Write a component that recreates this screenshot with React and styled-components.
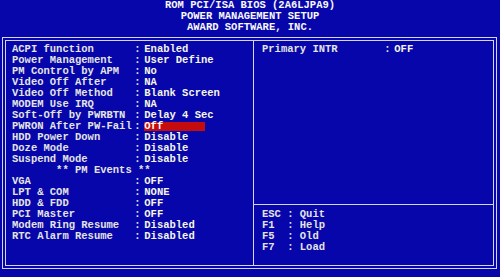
import React from 'react';
import styled, { createGlobalStyle } from 'styled-components';

const GlobalStyle = createGlobalStyle`
  body {
    margin: 0;
    background: #0606aa;
    font-family: 'Liberation Mono', 'DejaVu Sans Mono', monospace;
    font-weight: bold;
    font-size: 10.5px;
  }
`;

const settings = [
  ['ACPI function', ':', 'Enabled'],
  ['Power Management', ':', 'User Define'],
  ['PM Control by APM', ':', 'No'],
  ['Video Off After', ':', 'NA'],
  ['Video Off Method', ':', 'Blank Screen'],
  ['MODEM Use IRQ', ':', 'NA'],
  ['Soft-Off by PWRBTN', ':', 'Delay 4 Sec'],
  ['PWRON After PW-Fail', ':', 'Off', true],
  ['HDD Power Down', ':', 'Disable'],
  ['Doze Mode', ':', 'Disable'],
  ['Suspend Mode', ':', 'Disable'],
  null,
  ['VGA', ':', 'OFF'],
  ['LPT & COM', ':', 'NONE'],
  ['HDD & FDD', ':', 'OFF'],
  ['PCI Master', ':', 'OFF'],
  ['Modem Ring Resume', ':', 'Disabled'],
  ['RTC Alarm Resume', ':', 'Disabled'],
];

const keys = [
  ['ESC', 'Quit'],
  ['F1', 'Help'],
  ['F5', 'Old'],
  ['F7', 'Load'],
];

function App() {
  return (
    <Screen>
      <GlobalStyle />
      <Header>
        <div>ROM PCI/ISA BIOS (2A6LJPA9)</div>
        <div>POWER MANAGEMENT SETUP</div>
        <div>AWARD SOFTWARE, INC.</div>
      </Header>
      <Frame>
        <Inner>
          <LeftPanel>
            {settings.map((s, i) =>
              s ? (
                <Row key={i}>
                  <Label>{s[0]}</Label>
                  <Colon>{s[1]}</Colon>
                  <Value $active={s[3]}>{s[2]}</Value>
                </Row>
              ) : (
                <Section key={i}>** PM Events **</Section>
              )
            )}
          </LeftPanel>
          <RightPanel>
            <RightTop>
              <Row>
                <Label>Primary INTR</Label>
                <Colon>:</Colon>
                <Value>OFF</Value>
              </Row>
            </RightTop>
            <RightBottom>
              {keys.map(k => (
                <KeyRow key={k[0]}>
                  <span>{k[0]}</span>
                  <span>:</span>
                  <span>{k[1]}</span>
                </KeyRow>
              ))}
            </RightBottom>
          </RightPanel>
        </Inner>
      </Frame>
    </Screen>
  );
}

const Screen = styled.div`
  width: 500px;
  height: 277px;
  overflow: hidden;
  background: #0606aa;
`;

const Header = styled.div`
  text-align: center;
  line-height: 11px;
  color: #f8f8f8;
`;

const Frame = styled.div`
  margin: 4px 3px 0 2px;
  height: 232px;
  box-sizing: border-box;
  border: 1px solid #d4d4f4;
  padding: 2px;
`;

const Inner = styled.div`
  height: 100%;
  box-sizing: border-box;
  border: 1px solid #d4d4f4;
  display: grid;
  grid-template-columns: 247px 1fr;
`;

const LeftPanel = styled.div`
  padding: 3px 0 0 6px;
`;

const Row = styled.div`
  display: grid;
  grid-template-columns: 19.4ch 1.6ch auto;
  line-height: 11px;
  height: 11px;
  white-space: pre;
  color: #e4e4e4;
`;

const Label = styled.span``;

const Colon = styled.span``;

const Value = styled.span`
  color: #f6f6e8;
  justify-self: start;
  ${p => p.$active && `
    width: 61px;
    background: linear-gradient(
      to bottom,
      transparent 1px,
      #c40c0e 1px,
      #c40c0e 10px,
      transparent 10px
    );
    color: #ffffff;
  `}
`;

const Section = styled.div`
  line-height: 11px;
  height: 11px;
  padding-left: 7ch;
  color: #e4e4e4;
`;

const RightPanel = styled.div`
  border-left: 1px solid #d4d4f4;
  display: flex;
  flex-direction: column;
`;

const RightTop = styled.div`
  height: 164px;
  box-sizing: border-box;
  padding: 3px 0 0 8px;
  border-bottom: 1px solid #d4d4f4;
`;

const RightBottom = styled.div`
  padding: 4px 0 0 8px;
`;

const KeyRow = styled.div`
  display: grid;
  grid-template-columns: 4ch 2ch auto;
  line-height: 11px;
  height: 11px;
  color: #e4e4e4;
`;

export default App;
